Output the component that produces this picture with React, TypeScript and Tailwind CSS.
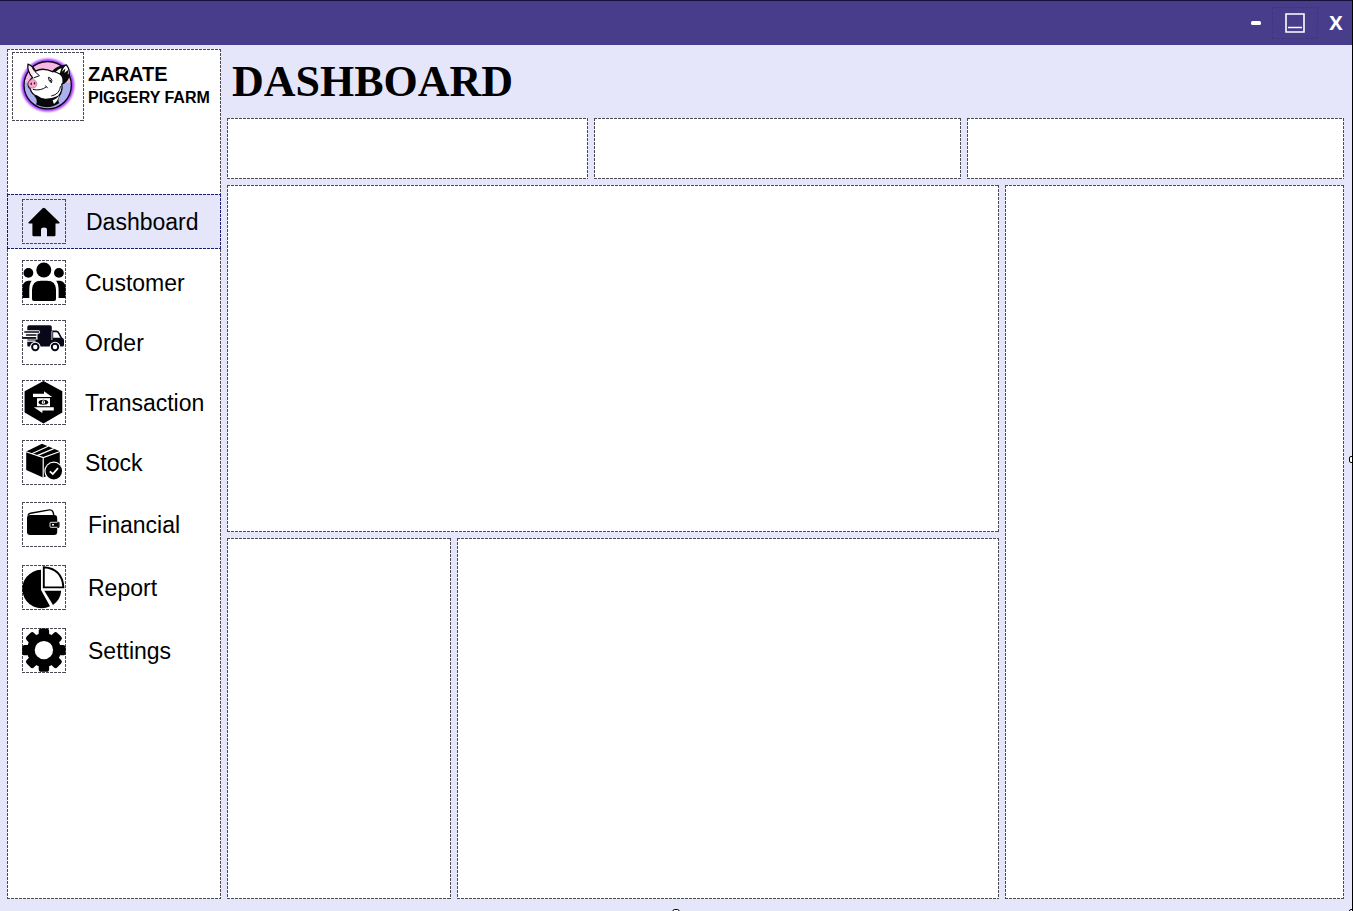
import type { ReactNode } from "react";

const FRAME =
  "[background-image:repeating-linear-gradient(90deg,#4a4a56_0_3px,transparent_3px_4px),repeating-linear-gradient(90deg,#4a4a56_0_3px,transparent_3px_4px),repeating-linear-gradient(180deg,#4a4a56_0_3px,transparent_3px_4px),repeating-linear-gradient(180deg,#4a4a56_0_3px,transparent_3px_4px)] [background-size:100%_1px,100%_1px,1px_100%,1px_100%] [background-position:top,bottom,left,right] bg-no-repeat";

const ACTIVE_FRAME =
  "[background-image:repeating-linear-gradient(90deg,#1b1b6e_0_3px,transparent_3px_4px),repeating-linear-gradient(90deg,#1b1b6e_0_3px,transparent_3px_4px),repeating-linear-gradient(180deg,#1b1b6e_0_3px,transparent_3px_4px),repeating-linear-gradient(180deg,#1b1b6e_0_3px,transparent_3px_4px)] [background-size:100%_1px,100%_1px,1px_100%,1px_100%] [background-position:top,bottom,left,right] bg-no-repeat";

function IconBox({ children }: { children: ReactNode }) {
  return (
    <span className={`block h-[45px] w-11 shrink-0 ${FRAME}`}>
      <svg viewBox="0 0 44 45" className="h-full w-full" aria-hidden="true">
        {children}
      </svg>
    </span>
  );
}

function HomeIcon() {
  return (
    <IconBox>
      <path
        d="M20.6 9.3Q21.8 8.2 23 9.3L37.4 23.2Q38.2 24.3 37 24.5H33.5V36Q33.5 37.2 32.3 37.2H25V31Q25 28.6 22 28.6T19 31V37.2H11.6Q10.4 37.2 10.4 36V24.5H7Q5.8 24.3 6.6 23.2Z"
        fill="#000"
      />
    </IconBox>
  );
}

function CustomerIcon() {
  return (
    <IconBox>
      <circle cx="21.8" cy="10" r="7.5" />
      <circle cx="6.4" cy="12.9" r="4.9" />
      <circle cx="36.9" cy="12.9" r="4.9" />
      <path d="M10 39V30Q10 20.7 19 20.7H25Q34 20.7 34 30V39Q34 41 32 41H12Q10 41 10 39Z" />
      <path d="M0.5 38V26Q2 21 6 20.7H9.6Q7.3 24 7.3 30V38Z" />
      <path d="M43.5 38V26Q42 21 38 20.7H34.2Q36.6 24 36.6 30V38Z" />
    </IconBox>
  );
}

function TruckIcon() {
  return (
    <IconBox>
      <path
        d="M7 5.2H28Q29.8 5.2 29.8 7V10.5H34.5Q36 10.5 37 12L40 17.5Q42 18.5 42 20V25Q42 26.6 40.4 26.6H6Q5.3 26.6 5.3 25V7Q5.3 5.2 7 5.2Z"
        fill="#080818"
      />
      <path d="M31.2 12.2H34.4Q35.2 12.2 35.7 13L38.3 17.7H31.2Z" fill="#fff" />
      <path d="M29.9 11V20" stroke="#fff" strokeWidth="0.8" />
      <path d="M4 10.2H16.5Q18.2 10.2 18.2 12T16.5 13.8H15.5V19.6H4" fill="#fff" />
      <path d="M2.8 12H16.8M1 17.9H13.8M4.5 15H14" stroke="#080818" strokeWidth="1.4" strokeLinecap="round" />
      <path d="M0.8 17.9H13.8" stroke="#080818" strokeWidth="1.6" />
      <path d="M5 21.2H13" stroke="#fff" strokeWidth="1.3" strokeLinecap="round" />
      <circle cx="13.3" cy="27" r="5.3" fill="#fff" />
      <circle cx="13.3" cy="27" r="3.2" fill="#fff" stroke="#080818" strokeWidth="2" />
      <circle cx="33" cy="27" r="5.3" fill="#fff" />
      <circle cx="33" cy="27" r="3.2" fill="#fff" stroke="#080818" strokeWidth="2" />
    </IconBox>
  );
}

function TransactionIcon() {
  return (
    <IconBox>
      <path d="M21.5 0.9L40.3 11.2V32.5L21.5 43.4L2.6 32.5V11.2Z" />
      <path
        d="M11 13.7H22V11.2L30.2 16.9H11ZM31.8 27.2H11.8L20.4 33V30.6H31.8Z"
        fill="#fff"
      />
      <path d="M15 18.2H28V26.2H15Z" fill="#fff" />
      <ellipse cx="21.4" cy="22.2" rx="4.8" ry="2.5" />
      <ellipse cx="21.4" cy="22.2" rx="1.6" ry="1.9" fill="#fff" />
      <path d="M21.4 20.9V23.5" stroke="#000" strokeWidth="0.7" />
    </IconBox>
  );
}

function StockIcon() {
  return (
    <IconBox>
      <path d="M20 3.7L37.8 11.3V31L21 37.6L4.2 30V11.6Z" />
      <path d="M4 11.8L21.3 17.6L38 11.5M21.2 17.5V38" fill="none" stroke="#fff" strokeWidth="1.2" />
      <path d="M9.8 13.8L26.2 6.2M15.2 15.6L31.7 8.6" stroke="#fff" strokeWidth="1.2" />
      <circle cx="31.8" cy="31.1" r="9.5" fill="#fff" />
      <circle cx="31.8" cy="31.1" r="8.3" />
      <path d="M27.8 31.3L30.8 34L36 28.2" fill="none" stroke="#fff" strokeWidth="1.8" />
    </IconBox>
  );
}

function WalletIcon() {
  return (
    <IconBox>
      <rect x="5" y="13" width="30.2" height="20" rx="3" />
      <path
        d="M6 13.5Q6.3 11.8 8.5 11.3L27.5 7.9Q30.3 7.6 31 10L31.8 13"
        fill="none"
        stroke="#000"
        strokeWidth="1.4"
      />
      <rect x="28" y="20.3" width="9.3" height="5" rx="0.8" fill="#000" stroke="#fff" strokeWidth="0.9" />
      <path d="M35.2 20.3H37V25.3H35.2" fill="none" stroke="#000" strokeWidth="1" />
      <circle cx="31" cy="22.8" r="1" fill="#fff" />
    </IconBox>
  );
}

function ReportIcon() {
  return (
    <IconBox>
      <path d="M19 4.8V25L28 41.2A19.2 19.2 0 1 1 19 4.8Z" />
      <path d="M22.3 25.8H39.2Q38.5 34.8 31 39.9Z" />
      <path d="M21.8 2.3V22.4H41.4Q40.2 3.7 21.8 2.3Z" fill="#fff" stroke="#000" strokeWidth="1.9" />
    </IconBox>
  );
}

const TEETH = [0, 45, 90, 135];

function GearIcon() {
  return (
    <IconBox>
      {TEETH.map((angle) => (
        <rect
          key={angle}
          x="16.7"
          y="0.4"
          width="10.4"
          height="43.4"
          rx="2.6"
          transform={`rotate(${angle} 21.9 22.1)`}
        />
      ))}
      <circle cx="21.9" cy="22.1" r="17" />
      <circle cx="21.9" cy="22.1" r="9.2" fill="#fff" />
    </IconBox>
  );
}

function PigLogo() {
  return (
    <svg viewBox="0 0 216 210" className="h-full w-full" role="img" aria-label="Zarate Piggery Farm logo">
      <defs>
        <radialGradient id="glow">
          <stop offset="0.84" stopColor="#9d35ff" />
          <stop offset="0.9" stopColor="#bd69ff" />
          <stop offset="1" stopColor="#e6caff" stopOpacity="0" />
        </radialGradient>
        <linearGradient id="disc" x1="0" y1="0" x2="0" y2="1">
          <stop offset="0.43" stopColor="#f7b9e3" />
          <stop offset="0.46" stopColor="#abb0ee" />
        </linearGradient>
      </defs>
      <circle cx="107" cy="101" r="87" fill="url(#glow)" />
      <circle cx="107" cy="101" r="72" fill="url(#disc)" stroke="#0b0712" strokeWidth="4" />
      <path d="M66 134Q78 146 72 160Q108 178 142 156Q134 146 150 124L124 118Z" fill="#09090b" />
      <path
        d="M47 37Q62 43 70 58Q92 46 122 60Q132 45 164 39Q177 55 171 76Q164 93 150 98Q154 120 138 136Q122 144 100 144Q84 143 74 134Q58 128 54 112Q46 106 48 94Q53 84 61 78Q44 58 47 37Z"
        fill="#fff"
        stroke="#08080b"
        strokeWidth="4"
        strokeLinejoin="round"
      />
      <path d="M121 61Q130 46 164 39Q154 48 150 60L161 50L158 64L170 54L168 68L173 67Q170 88 151 98Q154 82 148 73Q140 64 121 61Z" fill="#08080b" />
      <path d="M132 60Q140 53 149 49L144 65Z" fill="#fff" />
      <path d="M52 43Q63 50 68 60L61 74Q50 62 52 43Z" fill="#ffe3f2" />
      <path d="M60 48Q66 60 82 72L64 79" fill="none" stroke="#08080b" strokeWidth="3" />
      <ellipse cx="61" cy="97" rx="13" ry="13" fill="#f7a6c8" stroke="#b25584" strokeWidth="2" />
      <ellipse cx="57" cy="97" rx="2.2" ry="4" fill="#3d1630" />
      <ellipse cx="67" cy="95" rx="2.2" ry="4" fill="#3d1630" />
      <path d="M62 114Q86 119 103 106M100 102L107 110M146 104Q144 128 118 134" fill="none" stroke="#08080b" strokeWidth="3" />
      <path d="M109 77Q117 78 120 86L118 94Q110 88 109 77Z" fill="#fff" stroke="#08080b" strokeWidth="3" />
      <circle cx="115" cy="87" r="2.5" fill="#08080b" />
      <path d="M122 147Q138 141 142 130Q140 148 126 158Z" fill="#fff" />
    </svg>
  );
}

type Item = { label: string; Icon: () => ReactNode };

const OPERATIONS: Item[] = [
  { label: "Customer", Icon: CustomerIcon },
  { label: "Order", Icon: TruckIcon },
  { label: "Transaction", Icon: TransactionIcon },
  { label: "Stock", Icon: StockIcon },
];

const MANAGEMENT: Item[] = [
  { label: "Financial", Icon: WalletIcon },
  { label: "Report", Icon: ReportIcon },
  { label: "Settings", Icon: GearIcon },
];

function Panel({ className = "" }: { className?: string }) {
  return <section className={`bg-white ${FRAME} ${className}`} />;
}

function TitleBar() {
  return (
    <header className="flex h-[45px] items-center justify-end border-t border-[#16123a] bg-[#483d8b] pr-1.5 text-white">
      <button type="button" aria-label="Minimize" className="flex h-8 w-8 items-center justify-center">
        <svg viewBox="0 0 12 4" className="h-1 w-3" aria-hidden="true">
          <rect x="1" y="0" width="10" height="4" rx="1.5" fill="#fff" />
        </svg>
      </button>
      <button
        type="button"
        aria-label="Maximize"
        className="flex h-8 w-[46px] items-center justify-center border border-dashed border-[#40367d]"
      >
        <svg viewBox="0 0 20 20" className="h-5 w-5" aria-hidden="true">
          <path d="M1 1H19V19H1ZM3 14.5H17" fill="none" stroke="#fff" strokeWidth="1.6" />
        </svg>
      </button>
      <button
        type="button"
        aria-label="Close"
        className="ml-2 flex h-8 w-5 items-center justify-center font-['Open_Sans',sans-serif] text-xl font-bold"
      >
        X
      </button>
    </header>
  );
}

function Sidebar() {
  return (
    <aside className={`w-[214px] shrink-0 bg-white ${FRAME}`}>
      <div className="flex h-[145px] items-start gap-1 pt-[3px] pl-[5px]">
        <div className={`h-[69px] w-[72px] shrink-0 ${FRAME}`}>
          <PigLogo />
        </div>
        <div className="pt-2.5 font-bold whitespace-nowrap">
          <p className="text-xl leading-6">ZARATE</p>
          <p className="text-base leading-6">PIGGERY FARM</p>
        </div>
      </div>
      <nav className="text-[23px] leading-7">
        <a
          href="#dashboard"
          aria-current="page"
          className={`flex h-[55px] items-center gap-5 bg-[#e6e6fa] pl-[15px] ${ACTIVE_FRAME}`}
        >
          <HomeIcon />
          Dashboard
        </a>
        <ul className="flex flex-col gap-[15px] pt-[11px] pl-[15px]">
          {OPERATIONS.map(({ label, Icon }) => (
            <li key={label}>
              <a href={`#${label.toLowerCase()}`} className="flex items-center gap-[19px]">
                <Icon />
                {label}
              </a>
            </li>
          ))}
        </ul>
        <ul className="flex flex-col gap-[18px] pt-[17px] pl-[15px]">
          {MANAGEMENT.map(({ label, Icon }) => (
            <li key={label}>
              <a href={`#${label.toLowerCase()}`} className="flex items-center gap-[22px]">
                <Icon />
                {label}
              </a>
            </li>
          ))}
        </ul>
      </nav>
    </aside>
  );
}

export default function App() {
  return (
    <div className="relative flex min-h-screen flex-col overflow-hidden border-r border-black bg-[#e6e6fa] font-['Liberation_Sans',Arial,sans-serif] text-black">
      <TitleBar />
      <div className="flex flex-1 gap-1.5 pt-1 pr-2 pb-3 pl-[7px]">
        <Sidebar />
        <main className="flex min-w-0 flex-1 flex-col">
          <h1 className="h-[69px] pl-[5px] font-['Liberation_Serif','Times_New_Roman',serif] text-[44px] leading-[66px] font-bold">
            DASHBOARD
          </h1>
          <div className="grid h-[61px] grid-cols-[361fr_367fr_377fr] gap-1.5">
            <Panel />
            <Panel />
            <Panel />
          </div>
          <div className="mt-1.5 grid flex-1 grid-cols-[772fr_339fr] grid-rows-[347fr_361fr] gap-1.5">
            <Panel />
            <Panel className="row-span-2" />
            <div className="grid grid-cols-[224fr_542fr] gap-1.5">
              <Panel />
              <Panel />
            </div>
          </div>
        </main>
      </div>
      <span className="absolute top-1/2 -right-1 h-[7px] w-[7px] rounded-xs border border-black bg-white" />
      <span className="absolute -bottom-[5px] left-1/2 h-[7px] w-[7px] -translate-x-1/2 rounded-xs border border-black bg-white" />
      <span className="absolute -right-1 -bottom-[5px] h-[7px] w-[7px] rounded-xs border border-black bg-white" />
    </div>
  );
}
